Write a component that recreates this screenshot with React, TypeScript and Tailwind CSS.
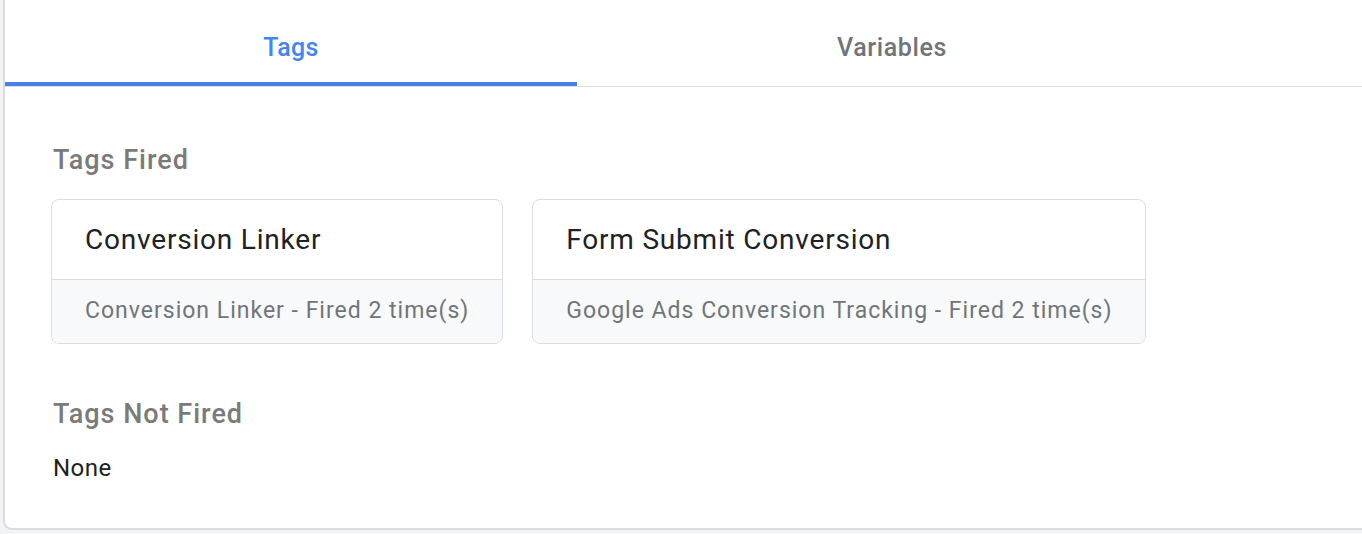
const font = "font-['Roboto','Liberation_Sans',sans-serif]";

function TagCard({ title, detail }: { title: string; detail: string }) {
  return (
    <div className="flex flex-col overflow-hidden rounded-[8px] border border-[#dadce0] bg-white">
      <div className="flex h-[79px] items-center px-[33px] text-[28px] tracking-[0.8px] text-[#202124]">{title}</div>
      <div className="flex h-[64px] items-center border-t border-[#dadce0] bg-[#f8f9fa] px-[33px] text-[23px] tracking-[1px] text-[#70757a]">
        {detail}
      </div>
    </div>
  );
}

export default function App() {
  return (
    <div className={`h-[534px] w-[1362px] overflow-hidden bg-[#f1f3f4] ${font}`}>
      <div className="ml-[3px] h-[530px] rounded-bl-[9px] border-b-2 border-l-2 border-[#dadce0] bg-white">
        <div className="flex h-[87px] border-b border-[#dadce0]">
          <button className="relative flex w-[572px] items-center justify-center pt-[10px] text-[25px] font-medium tracking-[0.3px] text-[#4285f4]">
            Tags
            <span className="absolute bottom-0 left-0 right-0 h-[4px] bg-[#4a80e8]" />
          </button>
          <button className="flex w-[630px] items-center justify-center pt-[10px] text-[25px] font-medium tracking-[0.6px] text-[#70757a]">
            Variables
          </button>
        </div>
        <div className="pl-[48px]">
          <h2 className="mt-[57px] text-[27px] font-medium leading-[32px] tracking-[1px] text-[#7a7a7a]">Tags Fired</h2>
          <div className="-ml-[2px] mt-[23px] flex gap-[29px]">
            <TagCard title="Conversion Linker" detail="Conversion Linker - Fired 2 time(s)" />
            <TagCard title="Form Submit Conversion" detail="Google Ads Conversion Tracking - Fired 2 time(s)" />
          </div>
          <h2 className="mt-[54px] text-[27px] font-medium leading-[32px] tracking-[1px] text-[#7a7a7a]">Tags Not Fired</h2>
          <p className="mt-[22px] text-[24px] leading-[32px] tracking-[0.5px] text-[#202124]">None</p>
        </div>
      </div>
    </div>
  );
}
